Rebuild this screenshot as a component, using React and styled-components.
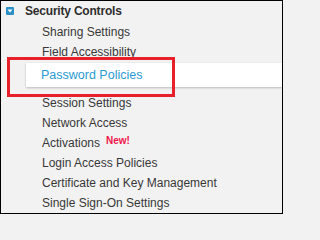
import React from "react";
import styled, { createGlobalStyle } from "styled-components";

const Global = createGlobalStyle`
  html, body { margin: 0; padding: 0; background: #f2f2f2; }
  * { box-sizing: border-box; }
`;

const Frame = styled.div`
  position: relative;
  width: 283px;
  height: 214px;
  border: 1px solid #000;
  background: #f2f2f2;
  overflow: hidden;
  font-family: "Liberation Sans", Arial, sans-serif;
  color: #333;
`;

const Header = styled.div`
  display: flex;
  align-items: flex-start;
  height: 21px;
  padding-left: 5px;
  line-height: 20px;
  font-size: 12px;
  font-weight: bold;
  letter-spacing: -0.2px;
  color: #2e2e2e;
`;

const Toggle = styled.span`
  flex: none;
  width: 8px;
  height: 8px;
  margin-top: 6px;
  margin-right: 11px;
  border-radius: 1px;
  background: #2b90c8;
  display: flex;
  align-items: center;
  justify-content: center;
`;

const List = styled.ul`
  list-style: none;
  margin: 0;
  padding: 0;
`;

const Item = styled.li`
  padding-left: 41px;
  height: 20px;
  line-height: 20px;
  font-size: 12px;
  color: #383838;
  white-space: nowrap;
`;

const ActiveItem = styled.li`
  margin: 1px 0 6px 25px;
  height: 24px;
  line-height: 24px;
  padding-left: 15px;
  background: #fff;
  font-size: 12.5px;
  color: #2a9ad3;
  box-shadow: 0 1px 2px rgba(0, 0, 0, 0.22), 0 0 1px rgba(0, 0, 0, 0.08);
`;

const NewBadge = styled.span`
  position: relative;
  top: -3px;
  margin-left: 6px;
  font-size: 10px;
  font-weight: bold;
  color: #f0154a;
`;

const Highlight = styled.div`
  position: absolute;
  left: 6px;
  top: 56px;
  width: 168px;
  height: 40px;
  border: 3px solid #e8202a;
  pointer-events: none;
`;

export default function App() {
  return (
    <>
      <Global />
      <Frame>
        <Header>
          <Toggle>
            <svg width="6" height="4" viewBox="0 0 6 4">
              <path d="M0.5 0.5 H5.5 L3 3.5 Z" fill="#fff" />
            </svg>
          </Toggle>
          Security Controls
        </Header>
        <List>
          <Item>Sharing Settings</Item>
          <Item>Field Accessibility</Item>
          <ActiveItem>Password Policies</ActiveItem>
          <Item>Session Settings</Item>
          <Item>Network Access</Item>
          <Item>
            Activations<NewBadge>New!</NewBadge>
          </Item>
          <Item>Login Access Policies</Item>
          <Item>Certificate and Key Management</Item>
          <Item>Single Sign-On Settings</Item>
        </List>
        <Highlight />
      </Frame>
    </>
  );
}
